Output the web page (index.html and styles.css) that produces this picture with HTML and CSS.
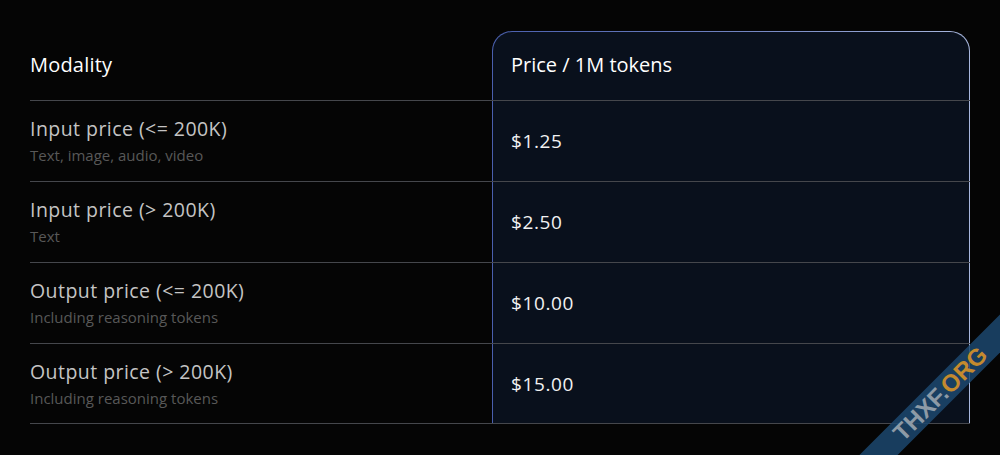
FILE: index.html
```html
<!DOCTYPE html>
<html lang="en">
<head>
<meta charset="utf-8">
<title>Pricing</title>
<link rel="stylesheet" href="styles.css">
</head>
<body>
<div class="page">
  <div class="table">
    <div class="highlight"></div>
    <div class="cell head c1 row1">Modality</div>
    <div class="cell head c2 row1">Price / 1M tokens</div>

    <div class="cell c1 row2"><div class="label">Input price (&lt;= 200K)</div><div class="sub">Text, image, audio, video</div></div>
    <div class="cell c2 row2 price">$1.25</div>

    <div class="cell c1 row3"><div class="label">Input price (&gt; 200K)</div><div class="sub">Text</div></div>
    <div class="cell c2 row3 price">$2.50</div>

    <div class="cell c1 row4"><div class="label">Output price (&lt;= 200K)</div><div class="sub">Including reasoning tokens</div></div>
    <div class="cell c2 row4 price">$10.00</div>

    <div class="cell c1 row5 last"><div class="label">Output price (&gt; 200K)</div><div class="sub">Including reasoning tokens</div></div>
    <div class="cell c2 row5 price last">$15.00</div>
  </div>
  <div class="ribbon"><span class="r1">THXF.</span><span class="r2">ORG</span></div>
</div>
</body>
</html>
```

FILE: styles.css
```css
html, body {
  margin: 0;
  padding: 0;
  background: #050505;
  font-family: "Open Sans", "Liberation Sans", sans-serif;
}
.page {
  position: relative;
  width: 1000px;
  height: 455px;
  overflow: hidden;
  box-sizing: border-box;
  padding: 31px 30px 0 30px;
}
.table {
  display: grid;
  grid-template-columns: 462px 478px;
  grid-template-rows: 69px repeat(4, 81px);
}
.highlight {
  grid-column: 2;
  grid-row: 1 / 6;
  border: 1.5px solid transparent;
  border-bottom: 0;
  border-radius: 20px 20px 0 0;
  background:
    linear-gradient(#09101c, #09101c) padding-box,
    linear-gradient(90deg, #4a5fae 0%, #6f82c0 50%, #a8b7de 100%) border-box;
}
.row1 { grid-row: 1; }
.row2 { grid-row: 2; }
.row3 { grid-row: 3; }
.row4 { grid-row: 4; }
.row5 { grid-row: 5; }
.cell {
  display: flex;
  flex-direction: column;
  justify-content: center;
  border-top: 1px solid #45474c;
}
.cell.c1 { grid-column: 1; }
.cell.c2 { grid-column: 2; padding-left: 19px; }
.cell.head {
  border-top: 0;
  color: #ffffff;
  font-size: 20px;
  font-weight: 500;
  letter-spacing: 0.2px;
  padding-bottom: 2px;
}
.cell.head.c2 { letter-spacing: 0; }
.cell.last { border-bottom: 1px solid #45474c; }
.label {
  color: #c4c4c4;
  font-size: 19.5px;
  letter-spacing: 0.45px;
  line-height: 24px;
}
.sub {
  color: #585858;
  font-size: 15px;
  line-height: 20px;
  margin-top: 4px;
}
.price {
  color: #f2f2f2;
  font-size: 19px;
  letter-spacing: 0.6px;
}
.ribbon {
  position: absolute;
  left: 790px;
  top: 380px;
  width: 300px;
  height: 27px;
  transform: rotate(-45deg);
  background: rgba(28, 72, 110, 0.85);
  display: flex;
  align-items: center;
  justify-content: center;
  font-family: "Liberation Sans", sans-serif;
  font-weight: 700;
  font-size: 24px;
  line-height: 1;
}
.r1 { color: #8d9aa6; }
.r2 { color: #c48a2e; }
```
